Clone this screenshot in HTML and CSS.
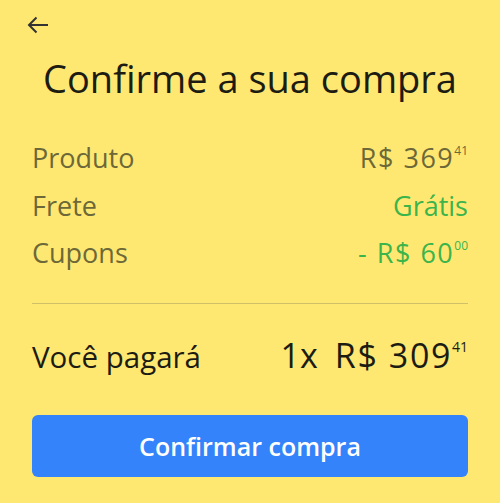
FILE: index.html
```html
<!DOCTYPE html>
<html lang="pt-BR">
<head>
<meta charset="utf-8">
<link rel="stylesheet" href="styles.css">
</head>
<body>
<main class="page">
  <header class="topbar">
    <button class="back" aria-label="Voltar">
      <svg width="22" height="18" viewBox="0 0 22 18"><path d="M21 9H2.5M9.5 1.5L2 9l7.5 7.5" fill="none" stroke="#333" stroke-width="2"/></svg>
    </button>
  </header>
  <h1 class="title">Confirme a sua compra</h1>
  <section class="summary">
    <div class="row"><span class="label">Produto</span><span class="value price">R$ 369<sup>41</sup></span></div>
    <div class="row"><span class="label">Frete</span><span class="value green">Grátis</span></div>
    <div class="row"><span class="label">Cupons</span><span class="value price green">- R$ 60<sup>00</sup></span></div>
  </section>
  <hr class="divider">
  <div class="total">
    <span class="total-label">Você pagará</span>
    <span class="total-value"><span class="qty">1x</span><span class="price">R$ 309<sup>41</sup></span></span>
  </div>
  <button class="confirm">Confirmar compra</button>
</main>
</body>
</html>
```
FILE: styles.css
```css
html, body {
  margin: 0;
  padding: 0;
  background: #fee872;
}
body {
  font-family: "Open Sans", "Noto Sans", sans-serif;
  color: #1c1c12;
}
.page {
  padding: 0 32px;
  display: flex;
  flex-direction: column;
}
.topbar {
  height: 50px;
  display: flex;
  align-items: center;
}
.back {
  border: 0;
  background: none;
  padding: 0;
  margin-left: -5px;
  width: 22px;
  height: 18px;
  display: flex;
}
.title {
  margin: 0;
  font-weight: 400;
  font-size: 38px;
  line-height: 56px;
  text-align: center;
  white-space: nowrap;
}
.summary {
  margin-top: 28px;
  display: flex;
  flex-direction: column;
}
.row {
  display: flex;
  justify-content: space-between;
  align-items: baseline;
  height: 47.5px;
  font-size: 27px;
  line-height: 47px;
  color: #6d6838;
}
.price {
  letter-spacing: 1.5px;
}
.green {
  color: #3cb44c;
}
sup {
  font-size: 12px;
  letter-spacing: 0;
  vertical-align: top;
  line-height: 1;
  position: relative;
  top: 11px;
  margin-left: 0;
}
.divider {
  margin: 26px 0 0;
  border: 0;
  border-top: 1.5px solid #cfc06a;
}
.total {
  display: flex;
  justify-content: space-between;
  align-items: baseline;
  margin-top: 26px;
  height: 50px;
  line-height: 50px;
}
.total-label {
  font-size: 29.5px;
}
.total-value {
  font-size: 34px;
}
.total-value .price {
  letter-spacing: 1.6px;
}
.total-value sup {
  font-size: 14px;
  top: 10px;
}
.qty {
  margin-right: 17px;
}
.confirm {
  margin-top: 35px;
  height: 62px;
  border: 0;
  border-radius: 6px;
  background: #3483fa;
  color: #fff;
  font-family: inherit;
  font-size: 25px;
  font-weight: 600;
}
```
